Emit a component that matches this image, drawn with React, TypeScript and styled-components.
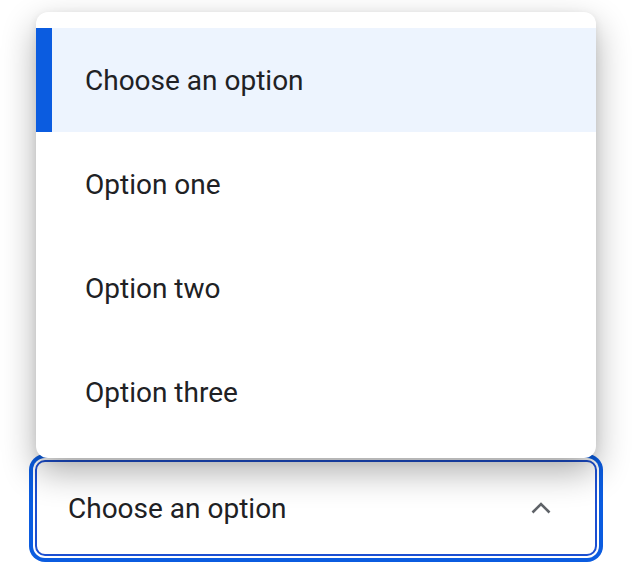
import React from "react";
import styled, { createGlobalStyle } from "styled-components";

const Global = createGlobalStyle`
  html, body { margin: 0; padding: 0; background: #ffffff; }
  body { font-family: Roboto, "Noto Sans", "Liberation Sans", sans-serif; }
`;

const Page = styled.div`
  height: 562px;
  display: flex;
  flex-direction: column;
  justify-content: flex-end;
  align-items: center;
  padding-bottom: 6px;
  box-sizing: border-box;
`;

const Field = styled.div`
  position: relative;
  width: 562px;
`;

const SelectBox = styled.div`
  box-sizing: border-box;
  height: 96px;
  border: 2px solid #1c4fd1;
  border-radius: 10px;
  box-shadow: 0 0 0 2px #ffffff, 0 0 0 6px #0b5ce0;
  background: #ffffff;
  display: flex;
  align-items: center;
  justify-content: space-between;
  padding: 0 44px 0 31px;
  font-size: 28px;
  color: #202124;
`;

const Menu = styled.ul`
  position: absolute;
  left: 1px;
  right: 1px;
  bottom: calc(100% + 2px);
  margin: 0;
  padding: 16px 0 14px;
  list-style: none;
  background: #ffffff;
  border-radius: 12px;
  box-shadow: 0 14px 34px rgba(0, 0, 0, 0.32), 0 2px 8px rgba(0, 0, 0, 0.08);
  z-index: 2;
`;

const Item = styled.li<{ $active?: boolean }>`
  height: 104px;
  display: flex;
  align-items: center;
  box-sizing: border-box;
  font-size: 28px;
  color: #202124;
  background: ${(p) => (p.$active ? "#edf4fe" : "transparent")};
  border-left: ${(p) => (p.$active ? "16px solid #0b5ce0" : "none")};
  padding-left: ${(p) => (p.$active ? "33px" : "49px")};
`;

const Chevron = () => (
  <svg width="20" height="12" viewBox="0 0 20 12" fill="none">
    <path d="M1.5 10.5 L10 2 L18.5 10.5" stroke="#5f6368" strokeWidth="2.6" />
  </svg>
);

const options = ["Choose an option", "Option one", "Option two", "Option three"];

export default function App() {
  return (
    <>
      <Global />
      <Page>
        <Field>
          <Menu role="listbox">
            {options.map((o, i) => (
              <Item key={o} $active={i === 0} role="option">
                {o}
              </Item>
            ))}
          </Menu>
          <SelectBox>
            <span>Choose an option</span>
            <Chevron />
          </SelectBox>
        </Field>
      </Page>
    </>
  );
}
